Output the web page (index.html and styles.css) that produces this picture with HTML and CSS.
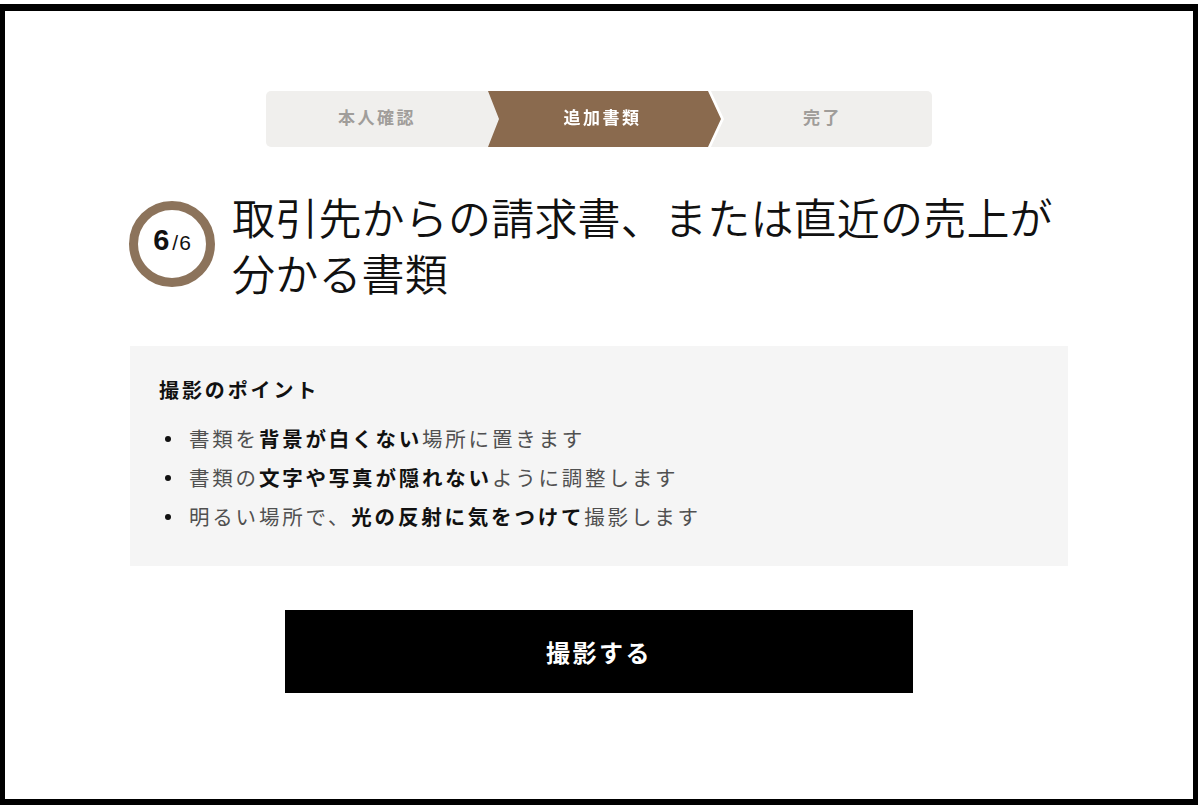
FILE: index.html
```html
<!DOCTYPE html>
<html lang="ja">
<head>
<meta charset="utf-8">
<title>追加書類</title>
<link rel="stylesheet" href="styles.css">
</head>
<body>
<div class="frame">
  <div class="content">
    <div class="stepper">
      <div class="step step-first">本人確認</div>
      <div class="step-current-wrap"><div class="step step-current">追加書類</div></div>
      <div class="step step-last">完了</div>
    </div>

    <div class="header">
      <div class="counter"><span class="counter-num">6</span><span class="counter-total">/6</span></div>
      <h1 class="title">取引先からの請求書、または直近の売上が分かる書類</h1>
    </div>

    <div class="tips">
      <h2 class="tips-title">撮影のポイント</h2>
      <ul class="tips-list">
        <li>書類を<b>背景が白くない</b>場所に置きます</li>
        <li>書類の<b>文字や写真が隠れない</b>ように調整します</li>
        <li>明るい場所で、<b>光の反射に気をつけて</b>撮影します</li>
      </ul>
    </div>

    <div class="actions">
      <button class="shoot-btn" type="button">撮影する</button>
    </div>
  </div>
</div>
</body>
</html>
```

FILE: styles.css
```css
* { box-sizing: border-box; }

html, body {
  margin: 0;
  padding: 0;
  background: #fff;
}

body {
  font-family: "Noto Sans CJK JP", "Noto Sans", sans-serif;
  color: #111;
}

.frame {
  width: 1198px;
  height: 801px;
  margin-top: 4px;
  border-style: solid;
  border-color: #000;
  border-width: 7px 5px 6px 5px;
  background: #fff;
}

.content {
  width: 938px;
  margin: 0 auto;
  padding-top: 80px;
  display: flex;
  flex-direction: column;
  align-items: center;
}

/* Stepper */
.stepper {
  width: 666px;
  height: 56px;
  display: flex;
  background: #f0efed;
  border-radius: 5px;
}

.step {
  height: 56px;
  display: flex;
  align-items: center;
  justify-content: center;
  padding-bottom: 5px;
  font-size: 17px;
  font-weight: 700;
  letter-spacing: 2.5px;
  color: #a09d9a;
}

.step-first {
  width: 222px;
}

.step-current-wrap {
  width: 233px;
  filter: drop-shadow(3px 0 0 #fff);
}

.step-current {
  width: 233px;
  background: #8a6a4e;
  color: #fff;
  padding-right: 4px;
  clip-path: polygon(0 0, 220px 0, 233px 50%, 220px 100%, 0 100%, 11px 50%);
}

.step-last {
  flex: 1;
  padding-right: 8px;
}

/* Header */
.header {
  width: 100%;
  margin-top: 41px;
  display: flex;
  align-items: center;
  gap: 17px;
}

.counter {
  flex: none;
  width: 86px;
  height: 86px;
  margin-left: -1px;
  border: 9px solid #8c735b;
  border-radius: 50%;
  display: flex;
  align-items: baseline;
  justify-content: center;
  padding-top: 14px;
  padding-left: 1px;
  font-family: "Liberation Sans", Arial, sans-serif;
  color: #111;
}

.counter-num {
  font-size: 29px;
  font-weight: 700;
  margin-right: 3px;
}

.counter-total {
  font-size: 21px;
  font-weight: 400;
  letter-spacing: 1px;
}

.title {
  margin: 0;
  font-size: 43px;
  line-height: 56px;
  font-weight: 350;
  color: #111;
  letter-spacing: 0.2px;
}

/* Tips */
.tips {
  width: 100%;
  margin-top: 46px;
  background: #f5f5f5;
  padding: 30px 29px 30px 29px;
}

.tips-title {
  margin: 0 0 15px;
  font-size: 20px;
  line-height: 28px;
  font-weight: 700;
  letter-spacing: 2.9px;
  color: #111;
}

.tips-list {
  margin: 0;
  padding: 0;
  list-style: none;
}

.tips-list li {
  position: relative;
  padding-left: 30px;
  font-size: 20.5px;
  line-height: 39px;
  letter-spacing: 2.8px;
  color: #505050;
}

.tips-list li::before {
  content: "";
  position: absolute;
  left: 6px;
  top: 17px;
  width: 6px;
  height: 6px;
  border-radius: 50%;
  background: #111;
}

.tips-list b {
  font-weight: 700;
  color: #111;
}

/* Button */
.actions {
  margin-top: 44px;
  display: flex;
  justify-content: center;
  width: 100%;
}

.shoot-btn {
  width: 628px;
  height: 83px;
  border: none;
  background: #000;
  color: #fff;
  font-family: "Noto Sans CJK JP", "Noto Sans", sans-serif;
  font-size: 24px;
  font-weight: 700;
  letter-spacing: 2.5px;
  padding-bottom: 2px;
  cursor: pointer;
}
```
